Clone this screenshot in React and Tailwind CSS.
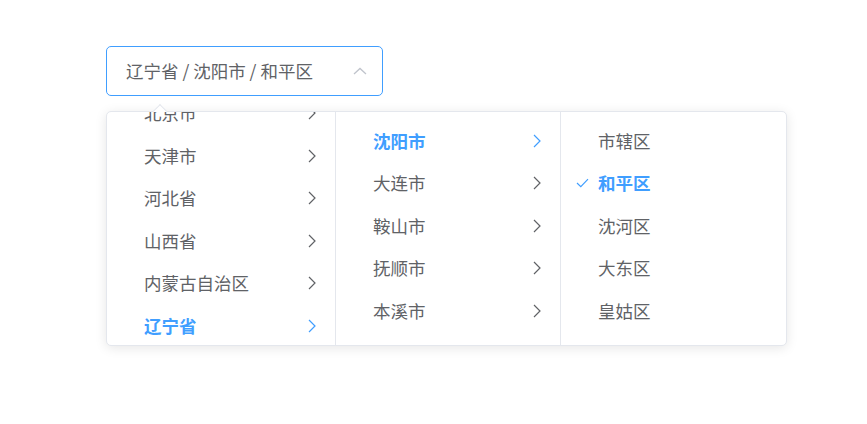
import React from "react";

const font = { fontFamily: '"Noto Sans CJK SC", "Noto Sans", sans-serif' };

function ChevronRight({ active }) {
  return (
    <svg width="8" height="14" viewBox="0 0 8 14" className="shrink-0">
      <path d="M1 1 L7 7 L1 13" fill="none" stroke={active ? "#409eff" : "#606266"} strokeWidth="1.2" />
    </svg>
  );
}

function Check() {
  return (
    <svg width="13" height="10" viewBox="0 0 13 10" className="absolute left-[15px] top-1/2 -translate-y-1/2">
      <path d="M1 5 L4.8 8.6 L12 1.2" fill="none" stroke="#409eff" strokeWidth="1.2" />
    </svg>
  );
}

function Node({ label, active, arrow, checked }) {
  return (
    <div className="relative flex h-[42.5px] shrink-0 items-center justify-between pl-[37px] pr-[19px]">
      {checked && <Check />}
      <span className={active ? "font-bold text-[#409eff]" : "text-[#606266]"}>{label}</span>
      {arrow && <ChevronRight active={active} />}
    </div>
  );
}

export default function App() {
  const col1 = ["北京市", "天津市", "河北省", "山西省", "内蒙古自治区", "辽宁省"];
  const col2 = ["沈阳市", "大连市", "鞍山市", "抚顺市", "本溪市"];
  const col3 = ["市辖区", "和平区", "沈河区", "大东区", "皇姑区"];
  return (
    <div className="h-[424px] w-[867px] bg-white pl-[106px] pt-[46px] text-[17.5px]" style={font}>
      <div className="flex h-[50px] w-[277px] items-center justify-between rounded-[5px] border border-[#409eff] pl-[19px] pr-[15px] text-[#606266]">
        <span>辽宁省 / 沈阳市 / 和平区</span>
        <svg width="14" height="8" viewBox="0 0 14 8">
          <path d="M1 7 L7 1.5 L13 7" fill="none" stroke="#c0c4cc" strokeWidth="1.3" />
        </svg>
      </div>
      <div className="relative mt-[15px] flex h-[235px] w-[681px] rounded-[5px] border border-[#e4e7ed] bg-white shadow-[0_2px_12px_rgba(0,0,0,0.1)]">
        <div className="absolute -top-[6px] left-[48px] h-[10px] w-[10px] rotate-45 border-l border-t border-[#e4e7ed] bg-white" />
        <div className="relative flex w-[229px] flex-col justify-end overflow-hidden border-r border-[#e4e7ed] pb-0">
          <div className="-mb-[2px] flex flex-col">
            {col1.map((l) => (
              <Node key={l} label={l} arrow active={l === "辽宁省"} />
            ))}
          </div>
        </div>
        <div className="flex w-[225px] flex-col border-r border-[#e4e7ed] py-[7.5px]">
          {col2.map((l) => (
            <Node key={l} label={l} arrow active={l === "沈阳市"} />
          ))}
        </div>
        <div className="flex flex-1 flex-col py-[7.5px]">
          {col3.map((l) => (
            <Node key={l} label={l} active={l === "和平区"} checked={l === "和平区"} />
          ))}
        </div>
      </div>
    </div>
  );
}
